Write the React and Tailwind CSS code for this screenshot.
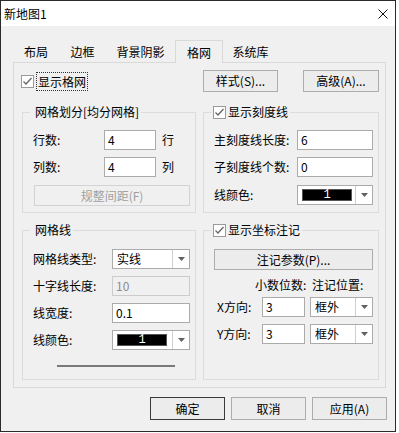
import React from 'react'

const FONT = { fontFamily: '"Noto Sans CJK SC", "Noto Sans", sans-serif' }

function Check() {
  return (
    <span className="w-[13px] h-[13px] shrink-0 bg-white border border-[#9a9a9a] flex items-center justify-center">
      <svg width="11" height="11" viewBox="0 0 11 11">
        <polyline points="1.5,5.5 4,8 9.5,2" fill="none" stroke="#666666" strokeWidth="1.3" />
      </svg>
    </span>
  )
}

function Btn({ children, w = 'w-[75px]', h = 'h-[22px]', strong, disabled }) {
  return (
    <div
      className={`${w} ${h} flex items-center justify-center border ${
        strong ? 'border-[#3a3a3a]' : disabled ? 'border-[#d3d3d3]' : 'border-[#adadad]'
      } ${disabled ? 'text-[#a0a0a0] bg-[#f0f0f0]' : 'bg-[#ececec]'}`}
    >
      {children}
    </div>
  )
}

function Field({ value, w, disabled }) {
  return (
    <div
      className={`${w} h-[20px] border flex items-center pl-[3px] ${
        disabled ? 'border-[#cccccc] bg-[#f0f0f0] text-[#8d8d8d]' : 'border-[#ababab] bg-white'
      }`}
    >
      {value}
    </div>
  )
}

function Arrow() {
  return (
    <svg width="7" height="4" viewBox="0 0 7 4">
      <polygon points="0,0 7,0 3.5,4" fill="#606060" />
    </svg>
  )
}

function Combo({ value, w, swatch }) {
  return (
    <div className={`${w} h-[20px] border border-[#ababab] bg-white flex`}>
      <div className="flex-1 flex items-center pl-[4px]">
        {swatch ? (
          <div className="w-[50px] h-[12px] bg-black border border-[#555] flex items-center justify-center text-white text-[12px] leading-none" style={{ fontFamily: '"Liberation Mono", monospace' }}>
            1
          </div>
        ) : (
          value
        )}
      </div>
      <div className="w-[17px] border-l border-[#cfcfcf] flex items-center justify-center">
        <Arrow />
      </div>
    </div>
  )
}

function Group({ title, checked, h, children, pt }) {
  return (
    <div className={`relative border border-[#dcdcdc] ${h} ${pt}`}>
      <div className="absolute left-[7px] -top-[9px] bg-[#f0f0f0] px-[2px] flex items-center gap-[2px] leading-[16px]">
        {checked ? <Check /> : <span className="w-px" />}
        <span>{title}</span>
      </div>
      {children}
    </div>
  )
}

export default function App() {
  const tabs = [
    { label: '布局', w: 'w-[46px]' },
    { label: '边框', w: 'w-[47px]' },
    { label: '背景阴影', w: 'w-[69px]' },
    { label: '格网', w: 'w-[48px]', active: true },
    { label: '系统库', w: 'w-[55px]' },
  ]

  return (
    <div className="w-[399px] h-[433px] bg-white text-[12px] leading-[16px] text-black" style={FONT}>
      <div className="w-[396px] h-[432px] border border-[#2b2b2b] flex flex-col bg-[#f0f0f0]">
        {/* Title bar */}
        <div className="h-[25px] bg-white flex items-center justify-between pl-[3px] pr-[7px]">
          <span>新地图1</span>
          <svg width="10" height="10" viewBox="0 0 10 10">
            <path d="M0.5 0.5 L9.5 9.5 M9.5 0.5 L0.5 9.5" stroke="#111" strokeWidth="1" />
          </svg>
        </div>

        <div className="pl-[12px] pr-[9px] pt-[14px]">
          {/* Tabs */}
          <div className="flex h-[22px]">
            {tabs.map((t) => (
              <div
                key={t.label}
                className={`${t.w} h-[23px] flex items-center justify-center pt-px ${
                  t.active ? 'border-l border-t border-r border-[#d9d9d9] bg-[#f0f0f0] relative z-10' : ''
                }`}
              >
                {t.label}
              </div>
            ))}
          </div>

          {/* Panel */}
          <div className="h-[326px] border border-[#d9d9d9] pl-[8px] pr-[5px] pt-[7px]">
            <div className="grid grid-cols-[174px_176px] gap-x-[7px]">
              {/* Top row */}
              <div className="h-[22px] flex items-center -ml-px">
                <Check />
                <span className="ml-[2px] border border-dotted border-[#333] px-px leading-[17px] mt-px">显示格网</span>
              </div>
              <div className="flex justify-between">
                <Btn>样式(S)...</Btn>
                <Btn w="w-[76px]">高级(A)...</Btn>
              </div>

              {/* Grid division */}
              <div className="mt-[20px]">
                <Group title="网格划分[均分网格]" h="h-[101px]" pt="pt-[17px]">
                  <div className="flex flex-col gap-[7px] pl-[10px]">
                    <div className="flex items-center">
                      <span className="w-[71px]">行数:</span>
                      <Field value="4" w="w-[52px]" />
                      <span className="ml-[6px]">行</span>
                    </div>
                    <div className="flex items-center">
                      <span className="w-[71px]">列数:</span>
                      <Field value="4" w="w-[52px]" />
                      <span className="ml-[6px]">列</span>
                    </div>
                    <div className="ml-px mt-px">
                      <Btn w="w-[156px]" h="h-[21px]" disabled>规整间距(F)</Btn>
                    </div>
                  </div>
                </Group>
              </div>

              {/* Tick lines */}
              <div className="mt-[20px]">
                <Group title="显示刻度线" checked h="h-[101px]" pt="pt-[17px]">
                  <div className="flex flex-col gap-[7px] pl-[10px]">
                    <div className="flex items-center">
                      <span className="w-[83px]">主刻度线长度:</span>
                      <Field value="6" w="w-[76px]" />
                    </div>
                    <div className="flex items-center">
                      <span className="w-[83px]">子刻度线个数:</span>
                      <Field value="0" w="w-[76px]" />
                    </div>
                    <div className="flex items-center mt-px">
                      <span className="w-[83px]">线颜色:</span>
                      <Combo w="w-[76px]" swatch />
                    </div>
                  </div>
                </Group>
              </div>

              {/* Grid lines */}
              <div className="mt-[17px]">
                <Group title="网格线" h="h-[150px]" pt="pt-[18px]">
                  <div className="flex flex-col gap-[7px] pl-[10px]">
                    <div className="flex items-center">
                      <span className="w-[79px]">网格线类型:</span>
                      <Combo value="实线" w="w-[78px]" />
                    </div>
                    <div className="flex items-center">
                      <span className="w-[79px]">十字线长度:</span>
                      <Field value="10" w="w-[78px]" disabled />
                    </div>
                    <div className="flex items-center">
                      <span className="w-[79px]">线宽度:</span>
                      <Field value="0.1" w="w-[78px]" />
                    </div>
                    <div className="flex items-center">
                      <span className="w-[79px]">线颜色:</span>
                      <Combo w="w-[78px]" swatch />
                    </div>
                  </div>
                  <div className="ml-[34px] mt-[15px] w-[118px] h-[2px] bg-[#7a7a7a]" />
                </Group>
              </div>

              {/* Coordinate labels */}
              <div className="mt-[17px]">
                <Group title="显示坐标注记" checked h="h-[150px]" pt="pt-[18px]">
                  <div className="pl-[10px]">
                    <Btn w="w-[159px]" h="h-[21px]">注记参数(P)...</Btn>
                    <div className="flex mt-[7px] pl-[41px]">
                      <span className="w-[57px]">小数位数:</span>
                      <span>注记位置:</span>
                    </div>
                    <div className="flex flex-col gap-[7px] mt-[4px] pl-[3px]">
                      <div className="flex items-center">
                        <span className="w-[45px]">X方向:</span>
                        <Field value="3" w="w-[43px]" />
                        <div className="ml-[5px]">
                          <Combo value="框外" w="w-[63px]" />
                        </div>
                      </div>
                      <div className="flex items-center">
                        <span className="w-[45px]">Y方向:</span>
                        <Field value="3" w="w-[43px]" />
                        <div className="ml-[5px]">
                          <Combo value="框外" w="w-[63px]" />
                        </div>
                      </div>
                    </div>
                  </div>
                </Group>
              </div>
            </div>
          </div>

          {/* Footer buttons */}
          <div className="flex justify-end gap-[6px] mt-[9px] -mr-px">
            <Btn h="h-[23px]" strong>确定</Btn>
            <Btn h="h-[23px]">取消</Btn>
            <Btn h="h-[23px]">应用(A)</Btn>
          </div>
        </div>
      </div>
    </div>
  )
}
